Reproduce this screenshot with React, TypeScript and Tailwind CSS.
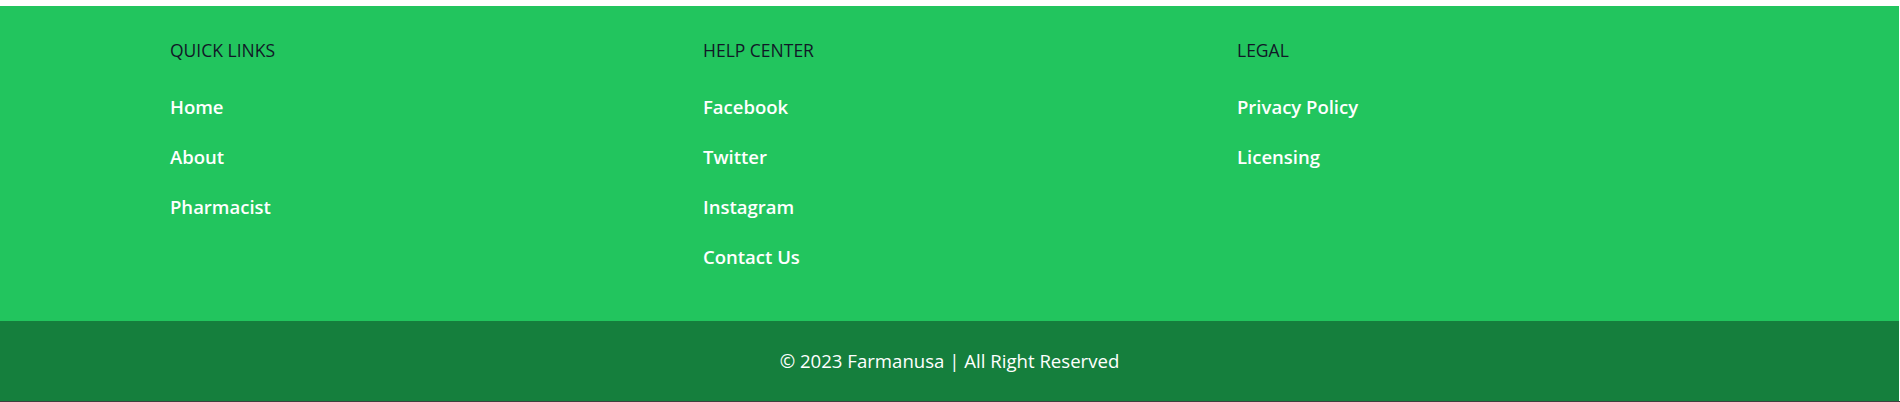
const columns = [
  { title: 'QUICK LINKS', links: ['Home', 'About', 'Pharmacist'] },
  { title: 'HELP CENTER', links: ['Facebook', 'Twitter', 'Instagram', 'Contact Us'] },
  { title: 'LEGAL', links: ['Privacy Policy', 'Licensing'] },
];

export default function App() {
  return (
    <div className="w-[1900px] h-[402px] bg-white font-['Open_Sans',sans-serif] flex flex-col">
      <div className="h-[6px] shrink-0" />
      <footer className="flex flex-col w-[1899px]">
        {/* link columns */}
        <div className="bg-[#22c55e] h-[315px] pl-[170px] pt-[32px] grid grid-cols-[533px_534px_1fr]">
          {columns.map(col => (
            <div key={col.title}>
              <h3 className="text-[17.5px] leading-[24px] text-[#111827] mb-[32px]">{col.title}</h3>
              <ul className="flex flex-col gap-[24px]">
                {col.links.map(link => (
                  <li key={link}>
                    <a href="#" className="text-[18.5px] leading-[26px] font-semibold text-white">
                      {link}
                    </a>
                  </li>
                ))}
              </ul>
            </div>
          ))}
        </div>

        {/* copyright */}
        <div className="bg-[#157f3d] h-[80px] flex items-center justify-center">
          <p className="text-[18.6px] text-white">© 2023 Farmanusa | All Right Reserved</p>
        </div>
      </footer>
      <div className="h-px bg-[#3f3f3f]" />
    </div>
  );
}
